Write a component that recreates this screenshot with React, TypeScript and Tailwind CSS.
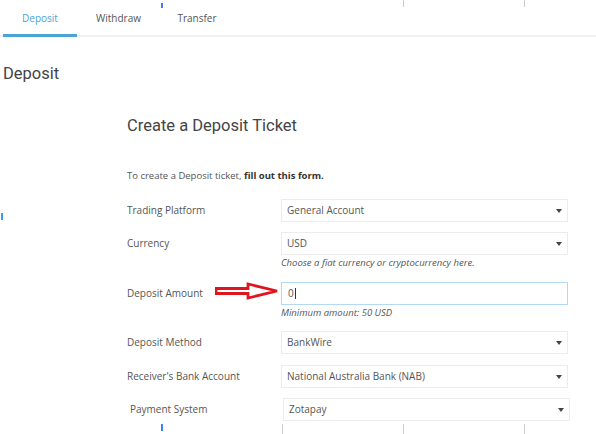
import React from "react";

const Caret = () => (
  <svg width="6" height="4" viewBox="0 0 6 4" className="shrink-0">
    <path d="M0 0 L6 0 L3 4 Z" fill="#444" />
  </svg>
);

function Select({ value, className = "" }: { value: string; className?: string }) {
  return (
    <div
      className={`flex h-[23px] w-[287px] items-center justify-between border border-[#ececec] bg-white pl-[5px] pr-[5px] text-[10px] text-[#555] ${className}`}
    >
      <span>{value}</span>
      <Caret />
    </div>
  );
}

function Row({
  label,
  children,
  className = "",
  labelClass = "",
}: {
  label: string;
  children: React.ReactNode;
  className?: string;
  labelClass?: string;
}) {
  return (
    <div className={`flex items-start ${className}`}>
      <div className={`w-[154px] shrink-0 pt-[4px] text-[10px] text-[#555] ${labelClass}`}>{label}</div>
      <div className="flex flex-col">{children}</div>
    </div>
  );
}

const Arrow = () => (
  <svg width="64" height="18" viewBox="0 0 64 18" className="absolute left-[215px] top-[282px]">
    <path
      d="M1 6.5 L33 6.5 L33 2 L62 9 L33 16 L33 11.5 L1 11.5 Z"
      fill="#fff"
      stroke="#e0141e"
      strokeWidth="2.8"
      strokeLinejoin="miter"
    />
  </svg>
);

export default function App() {
  return (
    <div
      className="relative h-[434px] w-[596px] overflow-hidden bg-white"
      style={{ fontFamily: '"Open Sans", "Noto Sans", sans-serif' }}
    >
      {/* stitching artifacts */}
      <span className="absolute left-[161px] top-[3px] h-[5px] w-[2px] bg-[#3b82f6]" />
      <span className="absolute left-[403px] top-0 h-[7px] w-px bg-[#ccc]" />
      <span className="absolute left-[524px] top-0 h-[7px] w-px bg-[#ccc]" />
      <span className="absolute left-px top-[213px] h-[7px] w-[1.5px] bg-[#3b9be6]" />
      <span className="absolute left-[161px] top-[424px] h-[7px] w-[2px] bg-[#3b82f6]" />
      <span className="absolute left-[282px] top-[424px] h-[10px] w-px bg-[#ccc]" />
      <span className="absolute left-[403px] top-[424px] h-[10px] w-px bg-[#ccc]" />
      <span className="absolute left-[524px] top-[424px] h-[10px] w-px bg-[#ccc]" />

      {/* tabs */}
      <div className="flex h-[37px] border-b-2 border-[#f1f1f1] pl-[3px] text-[10px]">
        <div className="-mb-[2px] flex w-[74px] items-center justify-center border-b-[3px] border-[#4ba3d6] pt-[2px] text-[#4ba3d6]">
          Deposit
        </div>
        <div className="flex w-[83px] items-center justify-center pt-[2px] text-[#555]">Withdraw</div>
        <div className="flex w-[74px] items-center justify-center pt-[2px] text-[#555]">Transfer</div>
      </div>

      <div
        className="ml-[3px] mt-[27px] text-[16.5px] leading-[20px] text-[#444]"
        style={{ fontFamily: 'Roboto, "Noto Sans", sans-serif' }}
      >
        Deposit
      </div>

      <div className="ml-[127px] mt-[32px]">
        <div
          className="text-[16.5px] leading-[20px] text-[#444]"
          style={{ fontFamily: 'Roboto, "Noto Sans", sans-serif' }}
        >
          Create a Deposit Ticket
        </div>

        <div className="mt-[33px] text-[9.5px] leading-[14px] text-[#555]">
          To create a Deposit ticket, <b className="font-bold text-[#333]">fill out this form.</b>
        </div>

        <Row label="Trading Platform" className="mt-[16px]">
          <Select value="General Account" />
        </Row>

        <Row label="Currency" className="mt-[10px]">
          <Select value="USD" />
          <div className="mt-[1px] text-[9.5px] italic leading-[14px] text-[#555]">
            Choose a fiat currency or cryptocurrency here.
          </div>
        </Row>

        <Row label="Deposit Amount" className="mt-[12px]">
          <div className="flex h-[23px] w-[287px] items-center border border-[#b3d9f4] bg-white pl-[6px] text-[10px] text-[#555]">
            0<span className="ml-px inline-block h-[11px] w-px bg-[#333]" />
          </div>
          <div className="mt-[1px] text-[9.5px] italic leading-[14px] text-[#555]">Minimum amount: 50 USD</div>
        </Row>

        <Row label="Deposit Method" className="mt-[11px]">
          <Select value="BankWire" />
        </Row>

        <Row label="Receiver's Bank Account" className="mt-[11px]">
          <Select value="National Australia Bank (NAB)" />
        </Row>

        <Row label="Payment System" className="mt-[10px]" labelClass="pl-[3px] pt-[2px]">
          <Select value="Zotapay" className="ml-[2px] h-[19px]" />
        </Row>
      </div>

      <Arrow />
    </div>
  );
}
